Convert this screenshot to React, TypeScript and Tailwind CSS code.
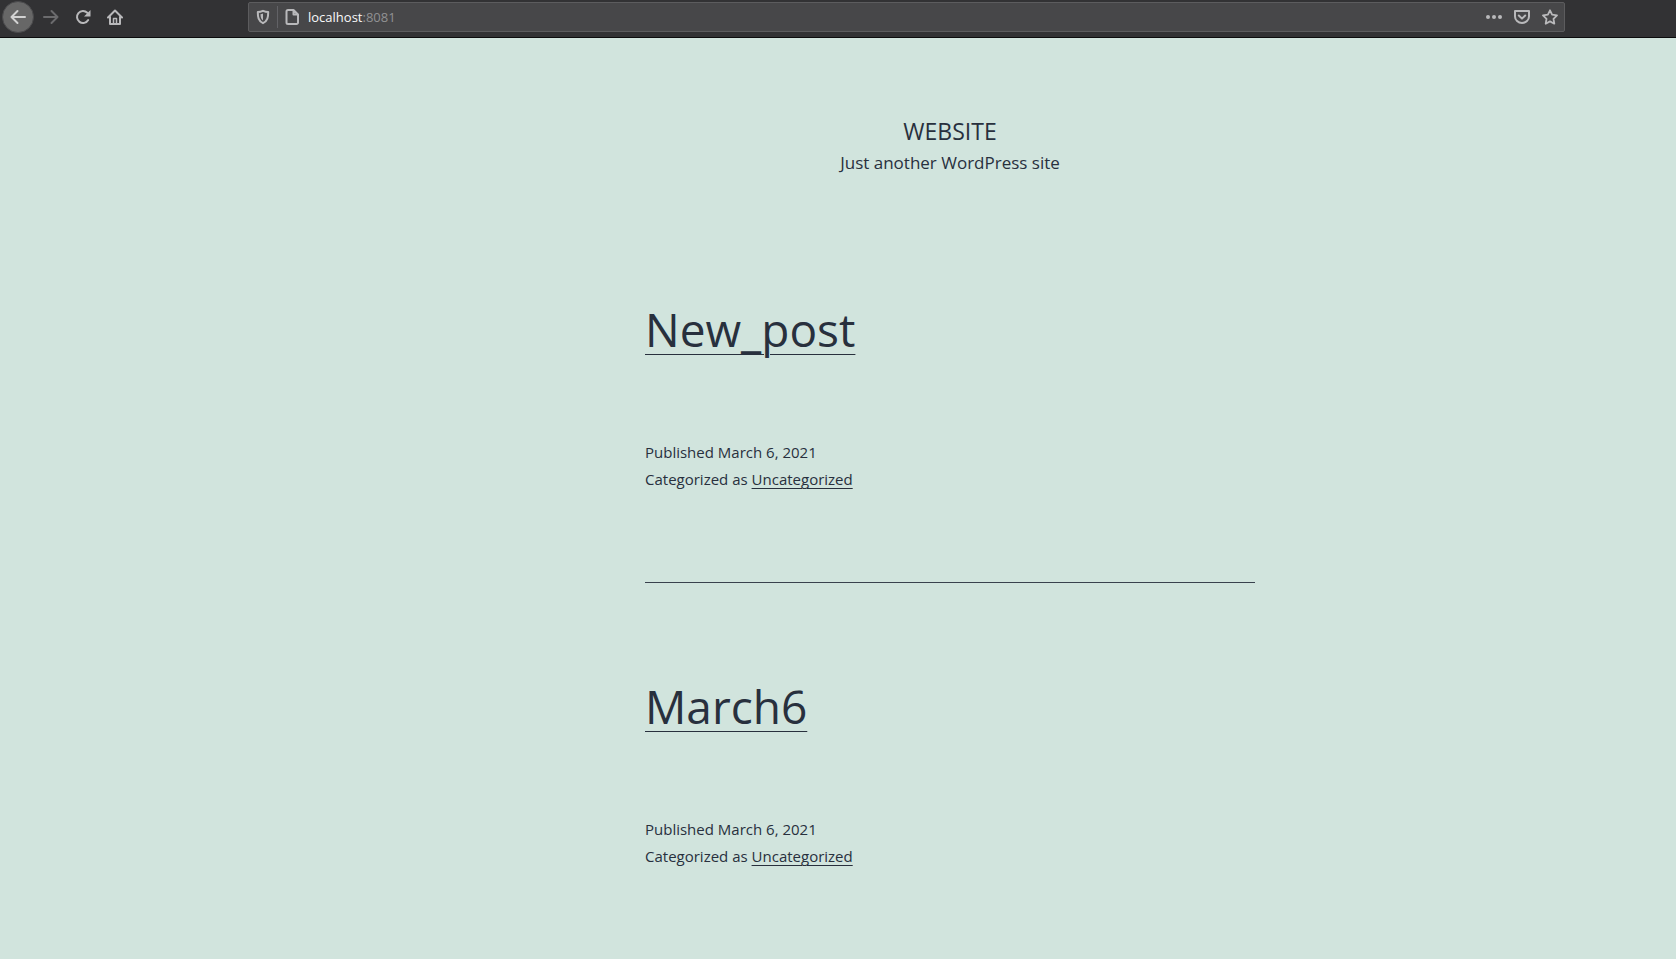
import type { ReactNode } from "react";

const posts = [
  { title: "New_post", date: "March 6, 2021", category: "Uncategorized" },
  { title: "March6", date: "March 6, 2021", category: "Uncategorized" },
];

function Icon({ children, className = "" }: { children: ReactNode; className?: string }) {
  return (
    <svg
      viewBox="0 0 16 16"
      className={`size-4 ${className}`}
      fill="none"
      stroke="currentColor"
      strokeWidth="2"
      strokeLinecap="round"
      strokeLinejoin="round"
      aria-hidden="true"
    >
      {children}
    </svg>
  );
}

function Toolbar() {
  return (
    <nav className="flex h-[38px] items-center border-b border-[#0c0c0d] bg-[#323234] pb-[3px] pl-0.5 text-[#b9b9bb]">
      <div className="flex w-[246px] shrink-0 items-center">
        <button
          aria-label="Back"
          className="flex size-8 items-center justify-center rounded-full border border-[#4a4a4c] bg-[#676767] text-[#d2d2d2]"
        >
          <Icon>
            <path d="M15 8H1.500M7.500 2l-6 6 6 6" />
          </Icon>
        </button>
        <button aria-label="Forward" className="flex size-8 items-center justify-center pl-0.5 text-[#6b6b6d]">
          <Icon>
            <path d="M1 8h13.500M8.500 2l6 6-6 6" />
          </Icon>
        </button>
        <button aria-label="Reload" className="flex size-8 items-center justify-center pl-0.5">
          <Icon>
            <path d="M13.200 11A6 6 0 1 1 12.300 3.800" />
            <path d="M15.500 1v6.500H9z" fill="currentColor" stroke="none" />
          </Icon>
        </button>
        <button aria-label="Home" className="flex size-8 items-center justify-center pl-0.5">
          <Icon>
            <path d="M1 8.500 8 1.500l7 7M3 8v7h10V8" />
            <path d="M6.500 15V9.500h3V15" strokeWidth="1.500" />
          </Icon>
        </button>
      </div>
      <div className="mr-[111px] flex h-[30px] flex-1 items-center rounded-xs border border-[#5c5c5e] bg-[#474749]">
        <button aria-label="Tracking protection" className="flex h-full w-7 items-center justify-center">
          <svg viewBox="0 0 14 16" className="h-4 w-3.5" fill="none" aria-hidden="true">
            <path
              d="M7 1.800c1.800.8 3.500 1.200 5.200 1.200 0 5.200-.5 9-5.200 11.200C2.300 12 1.800 8.200 1.800 3 3.500 3 5.200 2.600 7 1.800z"
              stroke="currentColor"
              strokeWidth="2"
              strokeLinejoin="round"
            />
            <path d="M7 4.600v6.800C5 10 4.600 8 4.500 5.200 5.500 5.200 6.200 5 7 4.600z" fill="currentColor" />
          </svg>
        </button>
        <span className="h-[22px] w-px bg-[#626266]" />
        <button aria-label="Site information" className="flex h-full w-7 items-center justify-center">
          <Icon>
            <path d="M4 1h5.500L14 5.500V13.500a1.500 1.500 0 0 1-1.500 1.500H4a1.500 1.500 0 0 1-1.500-1.500v-11A1.500 1.500 0 0 1 4 1zM9.500 1.500v4H14" />
          </Icon>
        </button>
        <a href="#" className="flex-1 pt-0.5 pl-0.5 font-['Open_Sans','Noto_Sans',sans-serif] text-[13px] text-[#919193]">
          <span className="text-[#f9f9fa]">localhost</span>:8081
        </a>
        <div className="flex items-center gap-3 pr-1.5">
          <button aria-label="Page actions">
            <Icon>
              <g fill="currentColor" stroke="none">
                <circle cx="2" cy="8" r="2" />
                <circle cx="8" cy="8" r="2" />
                <circle cx="14" cy="8" r="2" />
              </g>
            </Icon>
          </button>
          <button aria-label="Save to Pocket">
            <Icon>
              <path d="M1 2h14v5.500a7 6.500 0 0 1-14 0zM4.800 6.500 8 9.600l3.200-3.100" />
            </Icon>
          </button>
          <button aria-label="Bookmark">
            <Icon>
              <path
                d="m8 1.300 2.100 4.400 4.900.7-3.500 3.400.8 4.900L8 12.400l-4.300 2.300.8-4.900L1 6.400l4.900-.7z"
                strokeWidth="1.800"
              />
            </Icon>
          </button>
        </div>
      </div>
    </nav>
  );
}

export default function App() {
  return (
    <div className="min-h-screen bg-[#d1e4dd] font-['Open_Sans','Noto_Sans',sans-serif] text-[#28303d]">
      <Toolbar />
      <div className="pl-56">
        <header className="pt-[77px] text-center">
          <h1 className="text-[23px] leading-[32px]">WEBSITE</h1>
          <p className="text-[17px] leading-[32px]">Just another WordPress site</p>
        </header>
        <main className="mx-auto max-w-[610px] pt-[119px]">
          {posts.map((post) => (
            <article
              key={post.title}
              className="mb-[92px] border-b border-[#39414d] pb-[89px] last:mb-0 last:border-b-0"
            >
              <h2 className="mb-[79px] text-[46px] leading-[62px]">
                <a href="#" className="underline decoration-1 underline-offset-[7px]">
                  {post.title}
                </a>
              </h2>
              <footer className="text-[15px] leading-[27px]">
                <p>Published {post.date}</p>
                <p>
                  Categorized as{" "}
                  <a href="#" className="underline decoration-1 underline-offset-[3px]">
                    {post.category}
                  </a>
                </p>
              </footer>
            </article>
          ))}
        </main>
      </div>
    </div>
  );
}
